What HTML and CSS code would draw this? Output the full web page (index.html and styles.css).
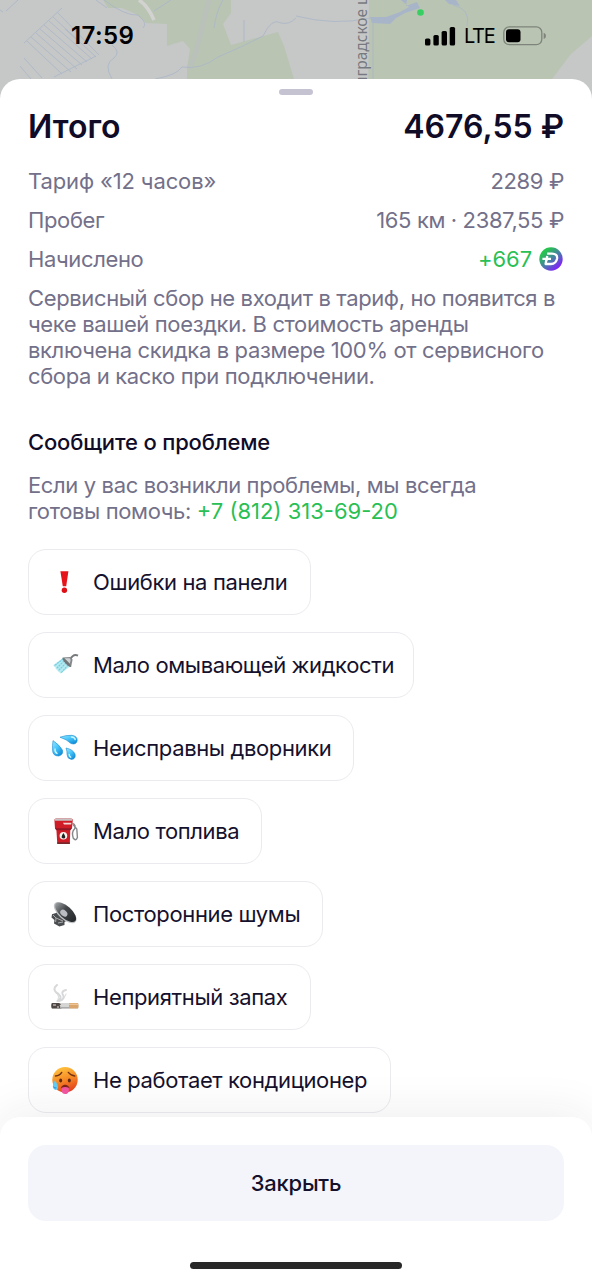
FILE: index.html
```html
<!DOCTYPE html>
<html lang="ru">
<head>
<meta charset="utf-8">
<meta name="viewport" content="width=device-width">
<title>Итого</title>
<link rel="stylesheet" href="styles.css">
</head>
<body>
<main class="screen">
  <svg class="map" viewBox="0 0 592 110" aria-hidden="true">
    <rect width="592" height="110" fill="#c6c7c7"/>
    <g fill="#b9c4b3">
      <path d="M103 0H231V13L223 24L231 45L278 32L284 46L294 79V110H187V68L190 49L183 41L167 46V24L146 23L136 14L122 8L108 8Z"/>
      <path d="M369 0H592V36L571 54L552 79V110H368Z"/>
    </g>
    <path d="M209 0L196 52L189 69" fill="none" stroke="#b9c1ba" stroke-width="5"/>
    <path d="M139 0Q148 6 154 20" fill="none" stroke="#d2d3d0" stroke-width="3.5"/>
    <g fill="none" stroke="#a9b6c8" stroke-width=".8">
      <path d="M0 10L3 12M6 11L18 0M24 43L62 8M27 41L62 74M31 37L71 72M36 33L77 69M40 29L82 65M44 25L87 62M49 21L92 59M53 17L96 57M58 13L99 55M24 58L42 78M20 66L31 79M54 77L96 56M65 29L78 41M96 0L107 8M104 0Q125 16 138 15Q148 23 143 28M154 11L171 0M223 0Q216 12 214 28M244 20V42M112 45Q121 52 114 58Q103 64 112 79M155 79Q177 75 182 67Q201 70 218 57Q242 47 263 36Q272 17 281 23Q289 25 296 18M296 16Q335 26 370 18M373 22V79M453 5Q471 9 467 26"/>
    </g>
    <path d="M401 0L407 0L406 6L417 2L420 8L405 13L396 18L390 24L372 23L370 17L386 17L400 12L409 7ZM445 0H456L460 6L449 4Z" fill="#a8b5c9"/>
    <text class="map-label" transform="translate(366.5 86) rotate(-90)">нградское ш</text>
    <circle cx="420.5" cy="12.5" r="3.3" fill="#38cf62"/>
  </svg>

  <header class="status">
    <time class="clock">17:59</time>
    <div class="signals">
      <svg width="31" height="20" viewBox="0 0 31 20"><rect x="0" y="12.5" width="5.4" height="7" rx="1.6"/><rect x="8.4" y="9" width="5.4" height="10.5" rx="1.6"/><rect x="16.6" y="5" width="5.4" height="14.5" rx="1.6"/><rect x="24.7" y="1" width="5.4" height="18.5" rx="1.6"/></svg>
      <span class="network">LTE</span>
      <svg width="44" height="20" viewBox="0 0 44 20"><rect x=".8" y=".9" width="38" height="17.8" rx="5.4" fill="none" stroke="#7e847b" stroke-width="1.3"/><rect x="3" y="3.3" width="14.5" height="13" rx="3"/><path d="M40.7 6.7Q43 7.5 43 9.8Q43 12.2 40.7 13Z" fill="#7e847b"/></svg>
    </div>
  </header>

  <section class="sheet">
    <div class="handle"></div>
    <h1 class="total"><span>Итого</span><span class="amount">4676,55 ₽</span></h1>
    <div class="row"><span class="tariff">Тариф «12 часов»</span><span>2289 ₽</span></div>
    <div class="row"><span>Пробег</span><span>165 км · 2387,55 ₽</span></div>
    <div class="row"><span>Начислено</span>
      <span class="bonus">+667
        <svg width="24" height="24" viewBox="0 0 24 24"><defs><linearGradient id="coin" x1=".1" y1=".15" x2=".8" y2=".95"><stop offset=".12" stop-color="#27c34f"/><stop offset=".55" stop-color="#4b78ad"/><stop offset=".9" stop-color="#7c2bf0"/></linearGradient></defs><circle cx="12" cy="12" r="11.7" fill="url(#coin)"/><path d="M8.2 6.6H13Q18.6 6.6 18.1 11.4Q17.2 17 11.9 17H6.6L7.4 12.4M3.4 11.9H12M8.2 9L7.4 14" fill="none" stroke="#fff" stroke-width="2.3" stroke-linejoin="round"/></svg>
      </span>
    </div>
    <p class="note">Сервисный сбор не входит в тариф, но появится в<br>чеке вашей поездки. В стоимость аренды<br>включена скидка в размере 100% от сервисного<br>сбора и каско при подключении.</p>
    <h2 class="subtitle">Сообщите о проблеме</h2>
    <p class="help">Если у вас возникли проблемы, мы всегда<br>готовы помочь: <a class="phone">+7 (812) 313-69-20</a></p>

    <div class="chips">
      <button class="chip w1">
        <svg class="emoji" viewBox="0 0 28 28"><path d="M9.4 3.3H17.4L15.2 18.3H11.8Z" fill="#e5131a"/><circle cx="13.4" cy="22.3" r="2.7" fill="#dd1017"/></svg>
        <span>Ошибки на панели</span></button>
      <button class="chip w2">
        <svg class="emoji" viewBox="0 0 28 28"><path d="M12 7L2.4 14L9.4 22.5L18.8 15.8Z" fill="#b7eaf1"/><path d="M12 8L3 15M13 10L5 18M15 12L7 20M17 14L10 22" stroke="#72cfde" stroke-width="1.2" stroke-dasharray="2 .7"/><path d="M19 9Q22 2.5 27 4.6" fill="none" stroke="#777a7c" stroke-width="2"/><path d="M11.5 6.4L19 6L21.6 8.5L20.1 16Q15 14.5 11.5 6.4Z" fill="#85898b"/><path d="M13.6 7.2L18.7 7.3L19.7 9.1L18.6 12.8Q15.5 11 13.6 7.2Z" fill="#d0d3d4"/><ellipse cx="15.7" cy="11.5" rx="1.5" ry="6" transform="rotate(-43 15.7 11.5)" fill="#717679"/></svg>
        <span>Мало омывающей жидкости</span></button>
      <button class="chip w3">
        <svg class="emoji" viewBox="0 0 28 28"><defs><linearGradient id="water" x2=".7" y2="1"><stop stop-color="#9ceaff"/><stop offset=".5" stop-color="#49c6fa"/><stop offset="1" stop-color="#138fda"/></linearGradient></defs><g fill="url(#water)" stroke="#1689d0" stroke-width=".6"><path d="M9 3.2Q15 1 21 1.3Q26.5 2.3 26.2 6.7Q25 11.2 20 9.5Q15.5 5.2 9 3.2Z"/><path d="M2 6.6Q8.5 11 11.4 16Q12.8 20.5 7.8 22Q1.8 22 1.6 16.7Q1.3 11 2 6.6Z"/><path d="M15 14Q22 15.5 24 20Q25.2 25 20.5 25.4Q16.3 25 16.1 20.8Q16.2 17 15 14Z"/></g><g fill="none" stroke="#caf5ff" stroke-width="1.4" stroke-linecap="round"><path d="M20.5 3Q23.7 3.3 24.2 5.5M4 15Q3.6 18 6 19.4M18.2 20.5Q18.2 22.4 19.7 23.2"/></g></svg>
        <span>Неисправны дворники</span></button>
      <button class="chip w4">
        <svg class="emoji" viewBox="0 0 28 28"><path d="M21.5 6.5Q25.5 8 23.5 12Q20.3 15 22.2 21Q24.8 24.7 26.4 20.5L25.8 12L22.4 8" fill="none" stroke="#85898b" stroke-width="1.4"/><path d="M3.4 3Q3.4 1.5 5 1.5H20Q21.8 1.5 21.8 3L21 11.2L19.3 13L18.8 26.8H6.3L5.4 13L4 11.5Z" fill="#cf1d28"/><path d="M4.2 1.4H21L21.4 3.7H3.5Z" fill="#c6c2c2"/><path d="M4 11.3H21L19.2 13.3H5.4Z" fill="#901724"/><path d="M12 5.7H20.5L20.2 7.6H13Z" fill="#f6d5d3"/><path d="M6.2 25.3H18.9V27H6.3Z" fill="#78282b"/><circle cx="12.4" cy="18.8" r="3.8" fill="#faf4ef"/><path d="M12.4 15.9Q16.2 21.2 12.4 21.5Q8.7 21.1 12.4 15.9Z" fill="#222"/></svg>
        <span>Мало топлива</span></button>
      <button class="chip w5">
        <svg class="emoji" viewBox="0 0 28 28"><defs><linearGradient id="speaker"><stop stop-color="#999da0"/><stop offset=".4" stop-color="#44484b"/><stop offset="1" stop-color="#25282b"/></linearGradient></defs><path d="M1 14.3L8 12L17.5 19.8L13.5 22V25L8.4 26.5L3 23.5L3.4 20L.5 17.4Z" fill="#4b4e51"/><path d="M2 15L5 18L4.6 22M5 18L12 21M7 23L12 22" fill="none" stroke="#aaa" stroke-width="1"/><ellipse cx="14.2" cy="12.7" rx="14" ry="6.7" transform="rotate(42 14.2 12.7)" fill="#bfc2c4"/><ellipse cx="14.6" cy="12.3" rx="13" ry="6" transform="rotate(42 14.6 12.3)" fill="url(#speaker)"/><ellipse cx="12.8" cy="13.2" rx="4" ry="2.9" transform="rotate(42 12.8 13.2)" fill="#babdc1"/></svg>
        <span>Посторонние шумы</span></button>
      <button class="chip w6">
        <svg class="emoji" viewBox="0 0 28 28"><g fill="none" stroke="#d7d8d9" stroke-linecap="round"><path d="M6.5 18Q12 15 7.5 11Q2 8 4 4L6 2M8 18Q15 16 11.5 11Q10.5 8 15 7" stroke-width="2"/><path d="M7 16Q9 13 5 10M13 15L15 11" stroke-width="1"/></g><rect y="20.1" width="27.5" height="5.3" rx="1" fill="#d5d5d3"/><path d="M1 20H8L10 21.2L8.5 22.4L10.5 25.5H1Q-.5 22.5 1 20Z" fill="#4f4744"/><path d="M2 22H5M6 24H8" stroke="#e5dfda"/><path d="M9 24H18V25.5H9Z" fill="#aaa"/><path d="M18 20H27Q28 22.5 27 25.5H18Z" fill="#d9a56d"/><path d="M18 20.6H27V22H18Z" fill="#edc493"/></svg>
        <span>Неприятный запах</span></button>
      <button class="chip w7">
        <svg class="emoji" viewBox="0 0 28 28"><defs><linearGradient id="heat" x1=".3" y1="0" x2=".65" y2="1"><stop stop-color="#ffc43d"/><stop offset=".5" stop-color="#f78b27"/><stop offset="1" stop-color="#e33e1d"/></linearGradient></defs><circle cx="14" cy="13.7" r="12.7" fill="url(#heat)"/><path d="M4.5 10Q9 9.7 10.7 6.4M17.3 6.4Q20 9.8 23.8 10" fill="none" stroke="#713117" stroke-width="1.4" stroke-linecap="round"/><ellipse cx="9.7" cy="14.6" rx="1.5" ry="2" fill="#622b18"/><ellipse cx="18.3" cy="14.6" rx="1.5" ry="2" fill="#622b18"/><path d="M9.7 22.3Q11 18.8 14 18.8Q17.3 18.8 18.7 22.3Z" fill="#7c2618"/><path d="M10.6 21.7Q14 20.4 17.8 21.7V25.2Q17 28 14.2 28Q11.1 27.8 10.7 25.3Z" fill="#f255a0"/><path d="M4 14.2Q7.6 20 6.9 22.2Q5.8 25 3 23.2Q.2 20.8 4 14.2Z" fill="#62cdf4"/><path d="M2.6 20.6Q3.4 23 5.3 21.7" fill="none" stroke="#248ed8"/></svg>
        <span>Не работает кондиционер</span></button>
    </div>
  </section>

  <footer class="footer">
    <button class="close">Закрыть</button>
    <div class="home"></div>
  </footer>
</main>
</body>
</html>
```
FILE: styles.css
```css
* { box-sizing: border-box; }
body { margin: 0; font-family: Inter, "Noto Sans", sans-serif; }
button { font: inherit; color: inherit; letter-spacing: inherit; }
.screen {
  position: relative;
  width: 592px;
  height: 1280px;
  display: flex;
  flex-direction: column;
  overflow: hidden;
  background: #fff;
}
.map { position: absolute; top: 0; left: 0; width: 592px; height: 110px; }
.map-label { font: 15.5px "Noto Sans", sans-serif; fill: #777980; stroke: #ced0cd; stroke-width: .6px; paint-order: stroke; }
.status {
  position: relative;
  height: 79px;
  flex: none;
  padding: 20px 45px 0 71px;
  display: flex;
  justify-content: space-between;
  align-items: flex-start;
}
.clock { font-size: 24px; line-height: 31px; font-weight: 600; letter-spacing: .4px; }
.signals { display: flex; align-items: center; padding-top: 5px; }
.signals svg { display: block; flex: none; }
.network { font-size: 20px; line-height: 20px; width: 30px; margin: 1px 9px 0 8px; letter-spacing: -1.3px; font-weight: 400; }
.sheet {
  position: relative;
  flex: 1;
  min-height: 0;
  padding: 10px 28px 0;
  border-radius: 20px 20px 0 0;
  background: #fff;
  color: #73708a;
  font-size: 22px;
  line-height: 26.3px;
  letter-spacing: -.37px;
}
.handle { width: 34px; height: 6px; margin: 0 auto 13px; border-radius: 3px; background: #c5c3d2; }
.total {
  margin: 0 0 16px;
  display: flex;
  justify-content: space-between;
  font-size: 32px;
  line-height: 38px;
  font-weight: 600;
  letter-spacing: 0;
  color: #100c28;
}
.row { display: flex; justify-content: space-between; align-items: center; height: 39px; }
.tariff { letter-spacing: -.13px; }
.bonus { display: flex; align-items: center; gap: 7px; color: #29bf54; padding-right: 1px; letter-spacing: -.1px; }
.note { margin: 5.5px 0 0; white-space: nowrap; }
.subtitle { margin: 39px 0 17.5px; color: #100c28; font-size: 22px; line-height: 26px; font-weight: 500; letter-spacing: -.16px; }
.help { margin: 0; white-space: nowrap; }
.phone { color: #29bf54; letter-spacing: 0; }
.chips { display: flex; flex-direction: column; align-items: flex-start; gap: 17px; margin-top: 24px; }
.chip {
  height: 66px;
  flex: none;
  display: flex;
  align-items: center;
  gap: 14px;
  padding: 0 0 0 22px;
  border: 1.5px solid #ebebef;
  border-radius: 18px;
  background: transparent;
  color: #15112d;
  white-space: nowrap;
}
.w1, .w6 { width: 283px; }
.w2 { width: 386px; }
.w3 { width: 326px; }
.w4 { width: 234px; }
.w5 { width: 295px; }
.w7 { width: 363px; }
.emoji { width: 28px; height: 28px; flex: none; }
.footer {
  position: relative;
  flex: none;
  height: 163px;
  padding: 28px 28px 0;
  border-radius: 20px 20px 0 0;
  background: #fff;
  box-shadow: 0 -4px 45px rgba(40, 38, 65, .08);
}
.close {
  display: block;
  width: 100%;
  height: 76px;
  border: 0;
  border-radius: 18px;
  background: #f4f5fa;
  color: #15112d;
  font-size: 22px;
  font-weight: 500;
  letter-spacing: -.25px;
}
.home { width: 212px; height: 7px; margin: 41px auto 0; border-radius: 4px; background: #282828; }
```
